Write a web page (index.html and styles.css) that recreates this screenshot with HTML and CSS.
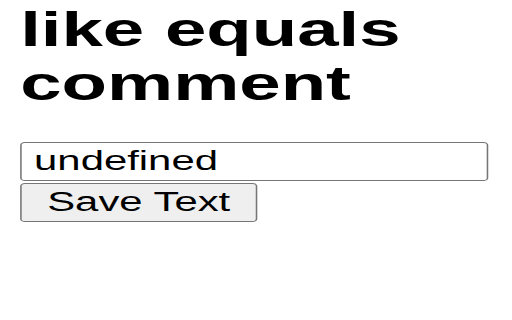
FILE: index.html
```html
<!DOCTYPE html>
<html lang="en">
  <head>
    <meta charset="utf-8" />
    <title>like equals comment</title>
    <link rel="stylesheet" href="styles.css">
  </head>
  <body>
    <div class="page">
      <h1>like equals comment</h1>
      <form class="save-form">
        <input type="text" class="text-input" value="undefined" />
        <button type="button" class="save-btn">Save Text</button>
      </form>
    </div>
  </body>
</html>
```
FILE: styles.css
```css
body {
  margin: 0;
  background-color: #fff;
  font-family: "Liberation Sans", Arial, sans-serif;
  color: #000;
}
.page {
  width: 330px;
  padding-left: 13px;
  transform: scaleX(1.55);
  transform-origin: 0 0;
}
h1 {
  margin: 3px 0 0;
  font-size: 48px;
  line-height: 54px;
  font-weight: bold;
}
.save-form {
  margin-top: 31px;
}
.text-input {
  display: block;
  box-sizing: border-box;
  width: 302px;
  height: 39px;
  margin: 0 0 2px;
  padding: 0 8px;
  border: 1px solid #767676;
  border-radius: 3px;
  font-family: inherit;
  font-size: 27px;
  color: #000;
  background: #fff;
}
.save-btn {
  display: block;
  box-sizing: border-box;
  width: 153px;
  height: 39px;
  padding: 0;
  border: 1px solid #767676;
  border-radius: 3px;
  background-color: #efefef;
  font-family: inherit;
  font-size: 27px;
  color: #000;
}
```
